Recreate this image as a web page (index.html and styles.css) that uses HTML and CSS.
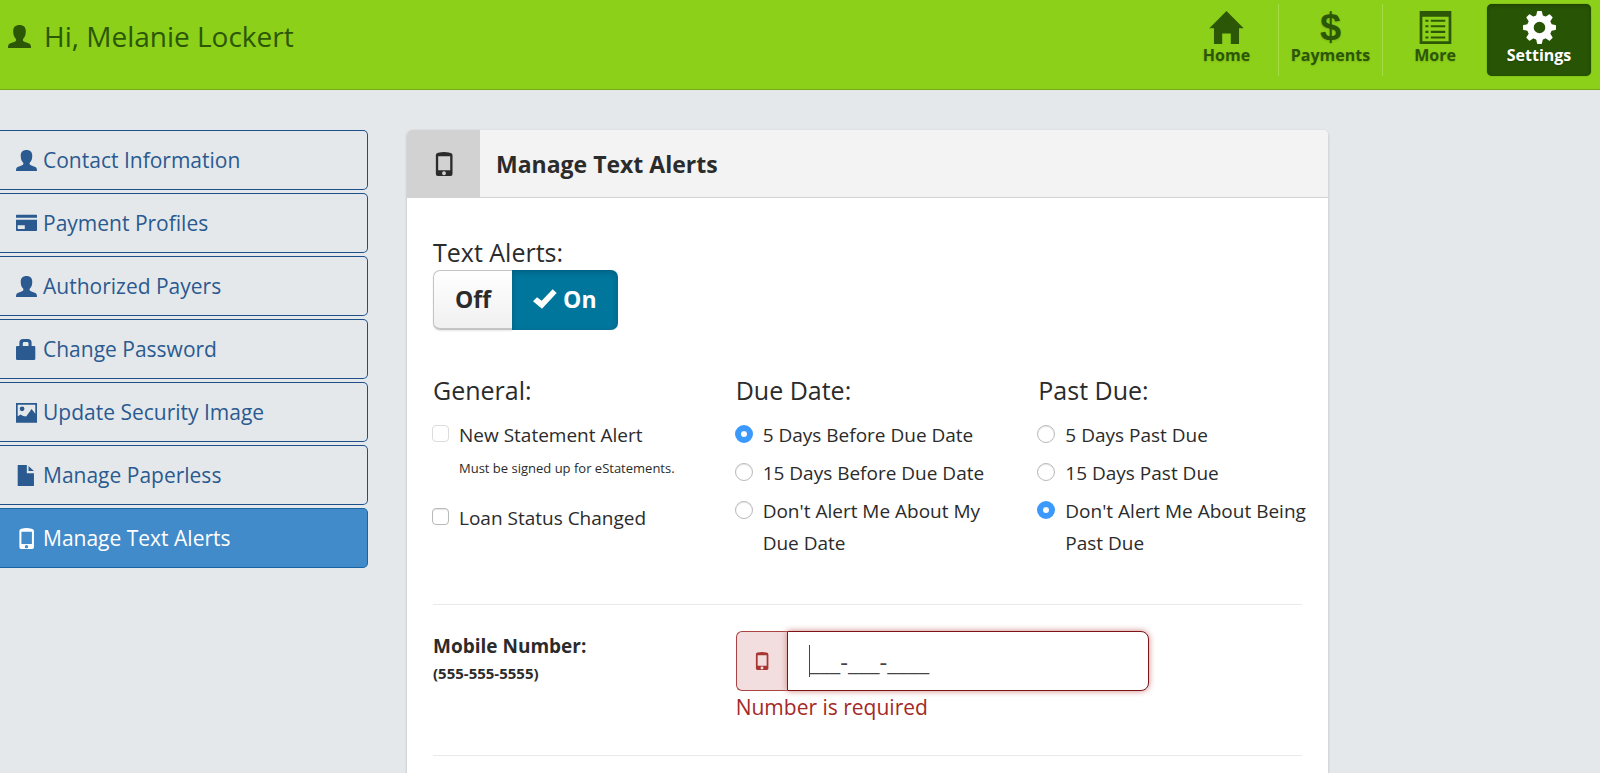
FILE: index.html
```html
<!DOCTYPE html>
<html lang="en">

<head>
    <meta charset="UTF-8">
    <meta name="viewport" content="width=device-width, initial-scale=1.0">
    <title>Manage Text Alerts</title>
    <link rel="stylesheet" href="styles.css">
</head>

<body>
    <!-- Icons -->
    <svg class="icon-defs" aria-hidden="true">
        <symbol id="icon-user" viewBox="0 0 62 62">
            <path d="M31 0C42 0 48 6 48 17C48 26 46 32 41 37C39 41 40 43 44 45L57 50C61 52 62 55 62 62H0C0 55 1 52 5 50L18 45C22 43 23 41 21 37C16 32 14 26 14 17C14 6 20 0 31 0Z" />
        </symbol>
        <symbol id="icon-card" viewBox="0 0 62 62">
            <path fill-rule="evenodd" d="M2 5H60Q62 5 62 7V14H0V7Q0 5 2 5ZM0 20H62V51Q62 53 60 53H2Q0 53 0 51ZM5 36V47H26V36Z" />
        </symbol>
        <symbol id="icon-lock" viewBox="0 0 62 62">
            <path fill-rule="evenodd" d="M3 21H10V11Q10 0 21 0H35Q46 0 46 11V21H54Q57 21 57 24V58Q57 62 53 62H4Q0 62 0 58V24Q0 21 3 21ZM20 21H37V13Q37 9 33 9H24Q20 9 20 13Z" />
        </symbol>
        <symbol id="icon-image" viewBox="0 0 62 62">
            <path fill-rule="evenodd" d="M0 3H62V61H0ZM5 8V42L14 37L21 41L30 43L46 21L57 35V8Z" />
            <circle cx="18" cy="20" r="7" />
        </symbol>
        <symbol id="icon-file" viewBox="0 0 62 62">
            <path d="M5 0H32V24H53V62H5ZM37 3L53 18H37Z" />
        </symbol>
        <symbol id="icon-phone" viewBox="0 0 62 62">
            <path fill-rule="evenodd" d="M16 2Q31 -2 46 2Q53 3 53 8V57Q53 62 48 62H15Q10 62 10 57V8Q10 3 16 2ZM16 11V47H47V11ZM31 50A5 5 0 1 0 31 60A5 5 0 1 0 31 50Z" />
        </symbol>
        <symbol id="icon-home" viewBox="0 0 104 100">
            <path d="M52 0L104 52H90V100H65V68H39V100H14V52H0Z" />
        </symbol>
        <symbol id="icon-list" viewBox="0 0 94 98">
            <path fill-rule="evenodd" d="M0 0H94V98H0ZM8 17V90H86V17Z" />
            <path d="M17 26H26V32H17ZM33 26H76V32H33ZM17 42H26V48H17ZM33 42H76V48H33ZM17 59H26V65H17ZM33 59H76V65H33ZM17 76H26V82H17ZM33 76H76V82H33Z" />
        </symbol>
        <symbol id="icon-gear" viewBox="0 0 94 94">
            <g fill="none" stroke="currentColor">
                <circle cx="47" cy="47" r="26" stroke-width="19" />
            </g>
            <g>
                <path id="tooth" d="M37 16L40 2Q40 0 42 0H52Q54 0 54 2L57 16Z" />
                <use href="#tooth" transform="rotate(45 47 47)" />
                <use href="#tooth" transform="rotate(90 47 47)" />
                <use href="#tooth" transform="rotate(135 47 47)" />
                <use href="#tooth" transform="rotate(180 47 47)" />
                <use href="#tooth" transform="rotate(225 47 47)" />
                <use href="#tooth" transform="rotate(270 47 47)" />
                <use href="#tooth" transform="rotate(315 47 47)" />
            </g>
        </symbol>
        <symbol id="icon-check" viewBox="0 0 72 60">
            <path d="M0 37L12 25L26 35L59 1L71 12L27 59Z" />
        </symbol>
    </svg>

    <header class="topbar">
        <div class="greeting">
            <svg class="greeting-icon"><use href="#icon-user" /></svg>
            <span>Hi, Melanie Lockert</span>
        </div>
        <nav class="main-nav">
            <a href="#" class="nav-item">
                <svg class="nav-icon"><use href="#icon-home" /></svg>
                <span>Home</span>
            </a>
            <a href="#" class="nav-item">
                <span class="nav-icon nav-dollar" aria-hidden="true">$</span>
                <span>Payments</span>
            </a>
            <a href="#" class="nav-item">
                <svg class="nav-icon"><use href="#icon-list" /></svg>
                <span>More</span>
            </a>
            <a href="#" class="nav-item active">
                <svg class="nav-icon"><use href="#icon-gear" /></svg>
                <span>Settings</span>
            </a>
        </nav>
    </header>

    <div class="page">
        <nav class="sidebar">
            <a href="#" class="side-item"><svg class="icon"><use href="#icon-user" /></svg>Contact Information</a>
            <a href="#" class="side-item"><svg class="icon"><use href="#icon-card" /></svg>Payment Profiles</a>
            <a href="#" class="side-item"><svg class="icon"><use href="#icon-user" /></svg>Authorized Payers</a>
            <a href="#" class="side-item"><svg class="icon"><use href="#icon-lock" /></svg>Change Password</a>
            <a href="#" class="side-item"><svg class="icon"><use href="#icon-image" /></svg>Update Security Image</a>
            <a href="#" class="side-item"><svg class="icon"><use href="#icon-file" /></svg>Manage Paperless</a>
            <a href="#" class="side-item active"><svg class="icon"><use href="#icon-phone" /></svg>Manage Text Alerts</a>
        </nav>

        <main class="panel">
            <div class="panel-header">
                <div class="panel-icon"><svg class="icon"><use href="#icon-phone" /></svg></div>
                <h1>Manage Text Alerts</h1>
            </div>
            <form class="panel-body">
                <h2>Text Alerts:</h2>
                <div class="toggle">
                    <button type="button" class="toggle-button">Off</button>
                    <button type="button" class="toggle-button on"><svg class="check-icon"><use href="#icon-check" /></svg>On</button>
                </div>

                <div class="options">
                    <section>
                        <h2>General:</h2>
                        <label class="option"><input type="checkbox" disabled><span>New Statement Alert</span></label>
                        <p class="hint">Must be signed up for eStatements.</p>
                        <label class="option"><input type="checkbox"><span>Loan Status Changed</span></label>
                    </section>
                    <section>
                        <h2>Due Date:</h2>
                        <label class="option"><input type="radio" name="due" checked><span>5 Days Before Due Date</span></label>
                        <label class="option"><input type="radio" name="due"><span>15 Days Before Due Date</span></label>
                        <label class="option"><input type="radio" name="due"><span>Don't Alert Me About My Due Date</span></label>
                    </section>
                    <section>
                        <h2>Past Due:</h2>
                        <label class="option"><input type="radio" name="past"><span>5 Days Past Due</span></label>
                        <label class="option"><input type="radio" name="past"><span>15 Days Past Due</span></label>
                        <label class="option"><input type="radio" name="past" checked><span>Don't Alert Me About Being Past Due</span></label>
                    </section>
                </div>

                <div class="mobile-row">
                    <label for="mobile" class="mobile-label">Mobile Number: <small>(555-555-5555)</small></label>
                    <div class="mobile-field">
                        <div class="input-group">
                            <span class="addon"><svg class="addon-icon"><use href="#icon-phone" /></svg></span>
                            <div class="input-wrap">
                                <input type="tel" id="mobile" value="___-___-____">
                            </div>
                        </div>
                        <p class="error">Number is required</p>
                    </div>
                </div>
            </form>
        </main>
    </div>
</body>

</html>
```

FILE: styles.css
```css
* {
    box-sizing: border-box;
}

body {
    font-family: "Open Sans", Arial, sans-serif;
    margin: 0;
    background-color: #e5e8eb;
    color: #2b2b2b;
}

h1,
h2,
p {
    margin: 0;
}

a {
    text-decoration: none;
}

svg {
    fill: currentColor;
    flex-shrink: 0;
}

.icon-defs {
    display: none;
}

.icon {
    width: 21px;
    height: 21px;
}

/* Top bar */
.topbar {
    display: flex;
    justify-content: space-between;
    align-items: flex-start;
    height: 90px;
    padding: 4px 9px 0 8px;
    background-color: #8dd019;
    border-bottom: 1px solid #74ab17;
    color: #2b5706;
}

.greeting {
    display: flex;
    align-items: center;
    gap: 13px;
    padding-top: 13px;
    font-size: 28px;
    line-height: 38px;
}

.greeting-icon {
    width: 23px;
    height: 23px;
}

.main-nav {
    display: flex;
}

.nav-item {
    display: flex;
    flex-direction: column;
    align-items: center;
    width: 104px;
    height: 72px;
    padding-top: 7px;
    color: #2b5706;
    font-size: 16px;
    font-weight: bold;
    line-height: 22px;
    text-shadow: 0 1px 2px rgba(0, 0, 0, 0.15);
    border-right: 1px solid #a5dc45;
}

.nav-item:nth-child(3) {
    border-right: none;
}

.nav-icon {
    width: 35px;
    height: 33px;
}

.nav-dollar {
    font-family: "Liberation Sans", Arial, sans-serif;
    font-size: 38px;
    line-height: 33px;
    text-align: center;
}

.nav-item.active {
    background-color: #285406;
    color: #fff;
    border: none;
    border-radius: 5px;
    box-shadow: inset 0 2px 4px rgba(0, 0, 0, 0.2), 0 0 1px #285406;
}

/* Page columns */
.page {
    display: flex;
    align-items: flex-start;
    gap: 39px;
    padding: 40px 17% 0 0;
}

.sidebar {
    display: flex;
    flex-direction: column;
    gap: 3px;
    flex: 0 0 23vw;
}

.side-item {
    display: flex;
    align-items: center;
    gap: 6px;
    height: 60px;
    padding-left: 16px;
    border: 1px solid #1d5089;
    border-left: none;
    border-radius: 0 5px 5px 0;
    color: #2a5a8f;
    font-size: 21px;
    line-height: 30px;
}

.side-item.active {
    background-color: #428bca;
    border-color: #1766a3;
    color: #fff;
}

/* Panel */
.panel {
    flex: 1;
    min-width: 0;
    min-height: calc(100vh - 130px);
    background-color: #fff;
    border-radius: 5px 5px 0 0;
    box-shadow: 0 1px 3px rgba(0, 0, 0, 0.2);
}

.panel-header {
    display: flex;
    height: 68px;
    background-color: #f3f3f3;
    border-bottom: 1px solid #d3d3d3;
    border-radius: 5px 5px 0 0;
}

.panel-icon {
    display: flex;
    align-items: center;
    justify-content: center;
    width: 73px;
    background-color: #d2d2d2;
    border-radius: 5px 0 0 0;
}

.panel-icon .icon {
    width: 24px;
    height: 24px;
}

h1 {
    padding: 0 16px;
    font-size: 23px;
    line-height: 68px;
}

.panel-body {
    padding: 36px 26px 0;
}

h2 {
    font-size: 25px;
    font-weight: normal;
    line-height: 36px;
}

.toggle {
    display: flex;
}

.toggle-button {
    display: flex;
    align-items: center;
    gap: 6px;
    height: 60px;
    padding: 0 21px 2px;
    border: 1px solid #c4c4c4;
    border-right: none;
    border-bottom: 2px solid #c4c4c4;
    border-radius: 7px 0 0 7px;
    background: linear-gradient(#fff, #f0f0f0);
    box-shadow: 0 1px 2px rgba(0, 0, 0, 0.1);
    color: #2b2b2b;
    font-family: inherit;
    font-size: 23px;
    font-weight: bold;
}

.toggle-button.on {
    border: none;
    border-radius: 0 7px 7px 0;
    background: #00769d;
    box-shadow: inset 0 2px 6px rgba(0, 0, 0, 0.2);
    color: #fff;
}

.check-icon {
    width: 24px;
    height: 20px;
}

.options {
    display: grid;
    grid-template-columns: repeat(3, 1fr);
    gap: 39px;
    padding: 42px 0 39px;
    border-bottom: 1px solid #e9e9e9;
}

/* Long labels may run a little into the gap */
.options section {
    margin-right: -12px;
}

.options h2 {
    margin-bottom: 11px;
}

.option {
    display: flex;
    align-items: flex-start;
    gap: 10px;
    margin-bottom: 6px;
    font-size: 19px;
    line-height: 32px;
}

.option input {
    appearance: none;
    flex-shrink: 0;
    width: 18px;
    height: 18px;
    margin: 6px 0 0 -1px;
    border: 1px solid #b9b9b9;
    background-color: #fff;
    box-shadow: inset 0 1px 1px rgba(0, 0, 0, 0.1);
}

.option input[type="checkbox"] {
    width: 17px;
    height: 17px;
    border-radius: 4px;
}

.option input[type="checkbox"]:disabled {
    border-color: #dcdcdc;
    box-shadow: none;
}

.option input[type="radio"] {
    border-radius: 50%;
}

.option input[type="radio"]:checked {
    border: 6px solid #3b99fc;
}

.hint {
    margin-bottom: 23px;
    padding-left: 26px;
    font-size: 13px;
    line-height: 22px;
}

/* Mobile number */
.mobile-row {
    display: grid;
    grid-template-columns: repeat(3, 1fr);
    column-gap: 39px;
    padding: 26px 0 33px;
    border-bottom: 1px solid #e9e9e9;
}

.mobile-label {
    font-size: 19px;
    font-weight: bold;
    line-height: 30px;
}

.mobile-label small {
    display: block;
    font-size: 15px;
    line-height: 24px;
}

.mobile-field {
    grid-column: 2 / 4;
}

.input-group {
    display: flex;
    width: 73%;
}

.addon {
    display: flex;
    align-items: center;
    justify-content: center;
    width: 51px;
    background-color: #f2dede;
    border: 1px solid #a94442;
    border-right: none;
    border-radius: 6px 0 0 6px;
    color: #a93532;
}

.addon-icon {
    width: 18px;
    height: 18px;
}

.input-wrap {
    position: relative;
    flex: 1;
}

/* Text cursor */
.input-wrap::before {
    content: "";
    position: absolute;
    top: 14px;
    left: 22px;
    width: 1px;
    height: 32px;
    background-color: #444;
}

.input-wrap input {
    display: block;
    width: 100%;
    height: 60px;
    padding: 0 21px;
    border: 1px solid #7d1416;
    border-radius: 0 8px 8px 0;
    background-color: #fff;
    box-shadow: 0 0 6px #ce8483;
    color: #444;
    font-family: inherit;
    font-size: 24px;
}

.error {
    margin-top: 1px;
    color: #a32a28;
    font-size: 21px;
    line-height: 30px;
}
```
